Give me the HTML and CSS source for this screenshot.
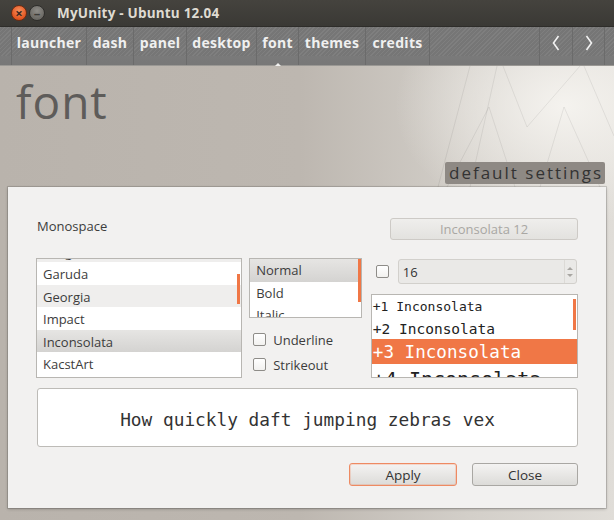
FILE: index.html
```html
<!DOCTYPE html>
<html>
<head>
<meta charset="utf-8">
<link rel="stylesheet" href="styles.css">
</head>
<body>
<div class="window">
  <div class="titlebar">
    <span class="wbtn close">×</span>
    <span class="wbtn min">–</span>
    <span class="title">MyUnity - Ubuntu 12.04</span>
  </div>
  <div class="nav">
    <div class="tabs">
      <span class="tab w-launcher">launcher</span>
      <span class="tab w-dash">dash</span>
      <span class="tab w-panel">panel</span>
      <span class="tab w-desktop">desktop</span>
      <span class="tab w-font active">font</span>
      <span class="tab w-themes">themes</span>
      <span class="tab w-credits">credits</span>
    </div>
    <div class="arrows">
      <span class="tab arrow"><svg width="8" height="16" viewBox="0 0 8 16"><polyline points="6.5,1 1.5,8 6.5,15" fill="none" stroke="#f2f2f2" stroke-width="1.6"/></svg></span>
      <span class="tab arrow"><svg width="8" height="16" viewBox="0 0 8 16"><polyline points="1.5,1 6.5,8 1.5,15" fill="none" stroke="#f2f2f2" stroke-width="1.6"/></svg></span>
    </div>
  </div>
  <div class="content">
    <svg class="lines" width="614" height="454" viewBox="0 0 614 454">
      <g stroke="rgba(0,0,0,0.07)" stroke-width="1" fill="none">
        <line x1="470" y1="0" x2="438" y2="121"/>
        <line x1="497" y1="0" x2="470" y2="121"/>
        <line x1="489" y1="41" x2="447" y2="121"/>
        <line x1="489" y1="41" x2="515" y2="121"/>
        <line x1="503" y1="0" x2="527" y2="61"/>
        <line x1="527" y1="61" x2="580" y2="0"/>
        <line x1="564" y1="41" x2="540" y2="121"/>
        <line x1="564" y1="41" x2="600" y2="121"/>
        <line x1="584" y1="0" x2="614" y2="70"/>
      </g>
    </svg>
    <div class="header">
      <h1 class="heading">font</h1>
      <div class="badge">default settings</div>
    </div>
    <div class="panel">
      <div class="row1">
        <span class="label">Monospace</span>
        <span class="fontbtn">Inconsolata 12</span>
      </div>
      <div class="row2">
        <div class="list fontlist">
          <div class="items">
            <div class="item alt partial">Gargi</div>
            <div class="item">Garuda</div>
            <div class="item alt">Georgia</div>
            <div class="item">Impact</div>
            <div class="item sel">Inconsolata</div>
            <div class="item">KacstArt</div>
          </div>
          <span class="scroll s1"></span>
        </div>
        <div class="stylecol">
          <div class="list stylelist">
            <div class="items">
              <div class="item sel">Normal</div>
              <div class="item">Bold</div>
              <div class="item">Italic</div>
            </div>
            <span class="scroll s2"></span>
          </div>
          <label class="check"><span class="box"></span>Underline</label>
          <label class="check"><span class="box"></span>Strikeout</label>
        </div>
        <div class="sizecol">
          <div class="sizerow">
            <span class="box"></span>
            <div class="spin">
              <span class="spinval">16</span>
              <span class="spinarrows"><span class="up"></span><span class="down"></span></span>
            </div>
          </div>
          <div class="list sizelist">
            <div class="mono m1">+1 Inconsolata</div>
            <div class="mono m2">+2 Inconsolata</div>
            <div class="mono m3">+3 Inconsolata</div>
            <div class="mono m4">+4 Inconsolata</div>
            <span class="scroll s3"></span>
          </div>
        </div>
      </div>
      <div class="preview">How quickly daft jumping zebras vex</div>
      <div class="buttons">
        <span class="btn apply">Apply</span>
        <span class="btn">Close</span>
      </div>
    </div>
  </div>
</div>
</body>
</html>
```

FILE: styles.css
```css
* { box-sizing: border-box; }
html, body { margin: 0; padding: 0; }
body {
  width: 614px;
  height: 520px;
  overflow: hidden;
  font-family: "Open Sans", "Noto Sans", sans-serif;
  background: #b3ada7;
}
.window { width: 614px; height: 520px; display: flex; flex-direction: column; }

.titlebar {
  height: 27px;
  background: linear-gradient(#45433e, #3a3935);
  display: flex;
  align-items: center;
  padding-left: 11px;
  border-bottom: 1px solid #2e2d2a;
}
.wbtn {
  width: 16px; height: 16px; border-radius: 50%;
  display: flex; align-items: center; justify-content: center;
  font-size: 13px; line-height: 1; font-weight: 700;
  color: #3a2a22;
  margin-right: 2px;
}
.wbtn.close { background: radial-gradient(circle at 50% 35%, #f8915f, #e2541f 70%); border: 1px solid #6b2c14; }
.wbtn.min { background: radial-gradient(circle at 50% 35%, #8e8c87, #6c6a65 70%); border: 1px solid #2f2e2b; color: #3c3b37; }
.title {
  margin-left: 10px;
  color: #dfdbd2;
  font-weight: 700;
  font-size: 13.5px;
  letter-spacing: 0.2px;
}

.nav {
  height: 39px;
  display: flex;
  justify-content: space-between;
  padding-left: 11px;
  background:
    linear-gradient(to bottom, transparent 0, transparent 29px, #7a7a7a 29px, #777 39px),
    repeating-linear-gradient(135deg, #7f7f7f 0 1px, #767676 1px 3px);
  border-bottom: 1px solid #9a9894;
}
.tabs, .arrows { display: flex; }
.tab {
  height: 38px;
  display: flex; align-items: center; justify-content: center;
  padding-bottom: 8px;
  border-left: 1px solid #6b6b6b;
  color: #f0f0f0;
  font-weight: 700;
  font-size: 14px;
  letter-spacing: 0.3px;
  position: relative;
}
.tabs .tab:last-child { border-right: 1px solid #6b6b6b; }
.w-launcher { width: 75px; }
.w-dash { width: 47px; }
.w-panel { width: 53px; }
.w-desktop { width: 70px; }
.w-font { width: 42px; }
.w-themes { width: 67px; }
.w-credits { width: 65px; }
.arrows { padding-right: 9px; }
.arrows .tab:last-child { border-right: 1px solid #6b6b6b; }
.arrow { width: 33px; padding-bottom: 6px; }
.active::after {
  content: "";
  position: absolute;
  left: 50%; bottom: -1px;
  margin-left: -3px;
  border: 3px solid transparent;
  border-bottom-color: #f2f1f0;
}

.content {
  flex: 1;
  position: relative;
  background:
    radial-gradient(ellipse 170px 120px at 565px 40px, rgba(246,244,240,0.95), rgba(246,244,240,0) 100%),
    linear-gradient(to right, #b9b3ac 0, #bdb7b0 300px, #d3cfc9 470px, #e0ddd8 614px);
  display: flex; flex-direction: column;
}
.lines { position: absolute; left: 0; top: 0; }
.header {
  height: 121px;
  position: relative;
  display: flex;
  flex-direction: column;
  justify-content: space-between;
  padding: 8px 9px 3px 16px;
}
.heading {
  margin: 0;
  font-weight: 400;
  font-size: 46px;
  line-height: 54px;
  color: #5e5c5a;
  letter-spacing: 1px;
}
.badge {
  align-self: flex-end;
  background: #8e8984;
  color: #333;
  font-size: 17px;
  line-height: 22px;
  letter-spacing: 2px;
  padding: 0 0 0 4px;
  border-radius: 2px;
  width: 160px;
  white-space: nowrap;
  overflow: hidden;
}

.panel {
  position: relative;
  margin: 0 8px 0 8px;
  height: 321px;
  background: #f2f1f0;
  box-shadow: 0 0 0 1px rgba(0,0,0,0.12), 0 1px 3px rgba(0,0,0,0.25);
  padding: 31px 28px 0 28px;
  color: #3c3c3c;
  font-size: 13px;
}
.row1 { display: flex; justify-content: space-between; height: 22px; }
.label { padding-left: 1px; line-height: 16px; }
.fontbtn {
  width: 188px; height: 22px;
  border: 1px solid #cdcac6;
  border-radius: 3px;
  background: linear-gradient(#efeeec, #e3e2df);
  color: #a9a7a3;
  display: flex; align-items: center; justify-content: center;
}

.row2 { display: flex; margin-top: 18px; height: 120px; }
.list {
  position: relative;
  background: #fff;
  border: 1px solid #b8b6b2;
  overflow: hidden;
}
.fontlist { width: 207px; height: 120px; }
.items { display: flex; flex-direction: column; }
.item { height: 22.5px; flex: none; line-height: 24px; padding-left: 6px; }
.partial { margin-top: -19.5px; }
.alt { background: #efeeed; }
.sel { background: linear-gradient(#e6e5e3, #d4d3d1); }
.scroll { position: absolute; background: #f07746; width: 3px; }
.s1 { right: 1px; top: 15px; height: 30px; }
.s2 { right: 0; top: 0; height: 43px; }
.s3 { right: 1px; top: 4px; height: 31px; }

.stylecol { width: 113px; margin-left: 7px; display: flex; flex-direction: column; }
.stylelist { height: 60px; }
.stylelist .item { line-height: 23px; }
.check { display: flex; align-items: center; height: 25px; margin-top: 0; padding-left: 4px; }
.stylecol .check:first-of-type { margin-top: 9px; }
.box {
  width: 13px; height: 13px; flex: none;
  border: 1px solid #8e8c88;
  border-radius: 2px;
  background: linear-gradient(#fff, #f2f1ef);
  margin-right: 7px;
}

.sizecol { width: 208px; margin-left: 9px; display: flex; flex-direction: column; }
.sizerow { display: flex; align-items: center; height: 25px; margin-top: 1px; padding-left: 5px; }
.sizerow .box { margin-right: 9px; }
.spin {
  width: 179px; height: 25px;
  border: 1px solid #d2d0cc;
  border-radius: 3px;
  background: #eae9e7;
  display: flex; align-items: center; justify-content: space-between;
}
.spinval { padding-left: 4px; color: #333; }
.spinarrows { width: 12px; height: 100%; border-left: 1px solid #dcdad6; display: flex; flex-direction: column; justify-content: center; align-items: center; gap: 4px; }
.up { border: 3px solid transparent; border-bottom: 3px solid #a8a6a2; border-top-width: 0; }
.down { border: 3px solid transparent; border-top: 3px solid #a8a6a2; border-bottom-width: 0; }
.sizelist { height: 84px; margin-top: 10px; }
.mono {
  font-family: "DejaVu Sans Mono", "Liberation Mono", monospace;
  color: #222;
  padding-left: 1px;
  white-space: nowrap;
}
.m1 { font-size: 13px; height: 22px; line-height: 24px; }
.m2 { font-size: 14.5px; height: 22px; line-height: 24px; }
.m3 { font-size: 17.6px; height: 25px; line-height: 26px; background: #f07746; color: #fff; }
.m4 { font-size: 20px; height: 26px; line-height: 30px; }

.preview {
  margin-top: 10px;
  margin-left: 1px;
  width: 541px;
  height: 59px;
  background: #fff;
  border: 1px solid #bdbbb7;
  border-radius: 3px;
  display: flex; align-items: center; justify-content: center;
  padding-top: 3px;
  font-family: "DejaVu Sans Mono", "Liberation Mono", monospace;
  font-size: 17.8px;
  color: #333;
}
.buttons { display: flex; justify-content: flex-end; gap: 15px; margin-top: 16px; }
.btn {
  width: 106px; height: 23px;
  border: 1px solid #a9a7a3;
  border-radius: 3px;
  background: linear-gradient(#f4f3f2, #dcdbd8);
  display: flex; align-items: center; justify-content: center;
  color: #333;
  font-size: 13.5px;
}
.apply { width: 108px; border-color: #ee8a62; box-shadow: inset 0 0 0 1px rgba(240,130,90,0.25); }
```
